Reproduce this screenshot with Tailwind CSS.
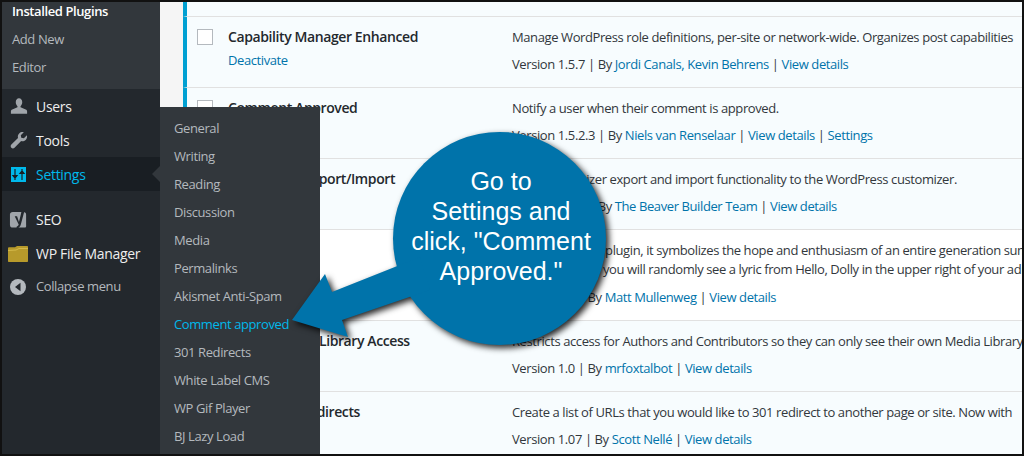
<!DOCTYPE html>
<html lang="en">
<head>
<meta charset="UTF-8" />
<title>Installed Plugins</title>
<script src="https://cdn.jsdelivr.net/npm/@tailwindcss/browser@4"></script>
</head>
<body class="bg-[#111]">
<div class="relative flex w-[1024px] h-[456px] overflow-hidden border-2 border-[#111] bg-[#f5f5f5] font-['Open_Sans',sans-serif] text-[13px] tracking-[-0.4px]">

  <!-- Sidebar -->
  <aside class="w-[158px] shrink-0 bg-[#23282d] text-[#eee]">
    <div class="h-[87px] bg-[#32373c] pl-[10px] text-[#b4b9be]">
      <div class="h-[23px] leading-[18px] font-semibold text-white">Installed Plugins</div>
      <div class="h-[28px] leading-[28px]">Add New</div>
      <div class="h-[28px] leading-[28px]">Editor</div>
    </div>
    <div class="flex h-[34px] items-center text-[14px] tracking-[-0.3px]">
      <svg class="ml-[8px] w-[18px] h-[18px] text-[#a0a5aa]" viewBox="0 0 20 20" fill="currentColor"><path d="M10 1.500c2.200 0 3.600 1.900 3.600 4.300 0 1.900-1 3.600-1.900 4.500v1.200l5.800 2.500c.9.400 1.500 1.100 1.500 2.100v2.400H1v-2.400c0-1 .6-1.700 1.500-2.100l5.800-2.500v-1.200c-.9-.9-1.900-2.600-1.900-4.500 0-2.400 1.400-4.300 3.600-4.300z"/></svg>
      <span class="ml-[8px]">Users</span>
    </div>
    <div class="flex h-[34px] items-center text-[14px] tracking-[-0.3px]">
      <svg class="ml-[8px] w-[18px] h-[18px] text-[#a0a5aa]" viewBox="0 0 20 20" fill="currentColor"><path d="M18.800 4.700c.5 1.900 0 3.900-1.400 5.200-1.400 1.400-3.300 1.800-5 1.300L5 18.600c-1 1-2.500 1-3.500 0s-1-2.500 0-3.500l7.400-7.400c-.5-1.700-.1-3.700 1.300-5C11.600 1.300 13.500.8 15.300 1.300L12 4.600l.5 2.900 2.900.5z"/></svg>
      <span class="ml-[8px]">Tools</span>
    </div>
    <div class="relative flex h-[34px] items-center bg-[#191e23] text-[#00b9eb] text-[14px] tracking-[-0.3px]">
      <svg class="ml-[9px] w-[15px] h-[15px]" viewBox="0 0 15 15"><rect width="15" height="15" fill="#00b9eb"/><path d="M4 2v6.500M2 8.500h4L4 11zM4 11v2M11 13V6.500M9 6.500h4L11 4zM11 4V2" stroke="#191e23" stroke-width="1.200" fill="#191e23"/></svg>
      <span class="ml-[10px]">Settings</span>
      <div class="absolute right-0 top-[9px] border-y-[8px] border-r-[8px] border-y-transparent border-r-[#32373c]"></div>
    </div>
    <div class="flex h-[34px] mt-[11px] items-center text-[14px] tracking-[-0.3px]">
      <svg class="ml-[7px] w-[19px] h-[21px]" viewBox="0 0 20 22"><path d="M4 3h11c2 0 3 1 3 3v12c0 1-.5 1.500-1.500 1.500H4c-2 0-3-1-3-3V6c0-2 1-3 3-3z" fill="#a0a5aa"/><path d="M6 7.500h2.500l2 6 2-8 1-4.500h3l-4 15c-.6 2-1.900 4-4.500 4.500v-2c1.200-.3 1.900-1 2.200-2.200z" fill="#23282d"/></svg>
      <span class="ml-[8px]">SEO</span>
    </div>
    <div class="flex h-[34px] items-center text-[14px] tracking-[-0.3px]">
      <svg class="ml-[6px] w-[20px] h-[17px] shrink-0" viewBox="0 0 20 17"><path d="M0 3.500C0 2.800.5 2.300 1.200 2.300H7L9 1h10c.6 0 1 .4 1 1v14c0 .6-.4 1-1 1H1c-.6 0-1-.4-1-1z" fill="#b79a2b"/><path d="M0 5l8-.5L11 3h9v1H11L8 5.500 0 6z" fill="#d4b94a"/></svg>
      <span class="ml-[8px] whitespace-nowrap">WP File Manager</span>
    </div>
    <div class="flex h-[34px] items-center text-[#b4b9be]">
      <svg class="ml-[8px] w-[16px] h-[16px]" viewBox="0 0 16 16"><circle cx="8" cy="8" r="8" fill="#b4b9be"/><path d="M10.500 3.800v8.400L5 8z" fill="#23282d"/></svg>
      <span class="ml-[10px] whitespace-nowrap">Collapse menu</span>
    </div>
  </aside>

  <!-- Plugin list -->
  <main class="flex-1 min-w-0 pl-[23px] text-[#32373c]">
    <div class="h-[14px] bg-[#f7fcfe] border-l-4 border-[#00a0d2]"></div>

    <div class="flex h-[71px] border-t border-[#e1e1e1] bg-[#f7fcfe] border-l-4 border-l-[#00a0d2] pl-[10px] overflow-hidden whitespace-nowrap">
      <div class="mt-[12px] w-[16px] h-[16px] border border-[#b4b9be] bg-white shrink-0"></div>
      <div class="w-[284px] ml-[15px] shrink-0 pt-[10px]">
        <div class="h-[22px] leading-[20px] text-[14px] font-semibold text-[#23282d]">Capability Manager Enhanced</div>
        <div class="leading-[22px] text-[#0073aa]">Deactivate</div>
      </div>
      <div class="pt-[10px]">
        <div class="h-[27px] leading-[20px]">Manage WordPress role definitions, per-site or network-wide. Organizes post capabilities</div>
        <div class="leading-[20px]">Version 1.5.7 | By <a class="text-[#0073aa]">Jordi Canals, Kevin Behrens</a> | <a class="text-[#0073aa]">View details</a></div>
      </div>
    </div>

    <div class="flex h-[71px] border-t border-[#e1e1e1] bg-[#f7fcfe] border-l-4 border-l-[#00a0d2] pl-[10px] overflow-hidden whitespace-nowrap">
      <div class="mt-[12px] w-[16px] h-[16px] border border-[#b4b9be] bg-white shrink-0"></div>
      <div class="w-[284px] ml-[15px] shrink-0 pt-[10px]">
        <div class="h-[22px] leading-[20px] text-[14px] font-semibold text-[#23282d]">Comment Approved</div>
      </div>
      <div class="pt-[10px]">
        <div class="h-[27px] leading-[20px]">Notify a user when their comment is approved.</div>
        <div class="leading-[20px]">Version 1.5.2.3 | By <a class="text-[#0073aa]">Niels van Renselaar</a> | <a class="text-[#0073aa]">View details</a> | <a class="text-[#0073aa]">Settings</a></div>
      </div>
    </div>

    <div class="flex h-[71px] border-t border-[#e1e1e1] bg-[#f7fcfe] border-l-4 border-l-[#00a0d2] pl-[10px] overflow-hidden whitespace-nowrap">
      <div class="mt-[12px] w-[16px] h-[16px] border border-[#b4b9be] bg-white shrink-0"></div>
      <div class="w-[284px] ml-[15px] shrink-0 pt-[10px]">
        <div class="h-[22px] leading-[20px] text-[14px] font-semibold text-[#23282d]">Customizer Export/Import</div>
      </div>
      <div class="pt-[10px]">
        <div class="h-[27px] leading-[20px]">Adds customizer export and import functionality to the WordPress customizer.</div>
        <div class="leading-[20px]">Version 0.9.2 | By <a class="text-[#0073aa]">The Beaver Builder Team</a> | <a class="text-[#0073aa]">View details</a></div>
      </div>
    </div>

    <div class="flex h-[91px] border-t border-[#e1e1e1] bg-white pl-[14px] overflow-hidden whitespace-nowrap">
      <div class="mt-[12px] w-[16px] h-[16px] border border-[#b4b9be] bg-white shrink-0"></div>
      <div class="w-[284px] ml-[15px] shrink-0 pt-[10px]">
        <div class="h-[22px] leading-[20px] text-[14px] font-semibold text-[#23282d]">Hello Dolly</div>
      </div>
      <div class="pt-[11px]">
        <div class="leading-[19px]">This is not just a plugin, it symbolizes the hope and enthusiasm of an entire generation summed up</div>
        <div class="h-[27px] leading-[19px]">When activated you will randomly see a lyric from Hello, Dolly in the upper right of your admin screen</div>
        <div class="leading-[20px]">Version 1.6 | By <a class="text-[#0073aa]">Matt Mullenweg</a> | <a class="text-[#0073aa]">View details</a></div>
      </div>
    </div>

    <div class="flex h-[71px] border-t border-[#e1e1e1] bg-[#f7fcfe] pl-[14px] overflow-hidden whitespace-nowrap">
      <div class="mt-[12px] w-[16px] h-[16px] border border-[#b4b9be] bg-white shrink-0"></div>
      <div class="w-[284px] ml-[15px] shrink-0 pt-[10px]">
        <div class="h-[22px] leading-[20px] text-[14px] font-semibold text-[#23282d]">Author Media Library Access</div>
      </div>
      <div class="pt-[10px]">
        <div class="h-[27px] leading-[20px]">Restricts access for Authors and Contributors so they can only see their own Media Library</div>
        <div class="leading-[20px]">Version 1.0 | By <a class="text-[#0073aa]">mrfoxtalbot</a> | <a class="text-[#0073aa]">View details</a></div>
      </div>
    </div>

    <div class="flex h-[71px] border-t border-[#e1e1e1] bg-[#f7fcfe] pl-[14px] overflow-hidden whitespace-nowrap">
      <div class="mt-[12px] w-[16px] h-[16px] border border-[#b4b9be] bg-white shrink-0"></div>
      <div class="w-[284px] ml-[15px] shrink-0 pt-[10px]">
        <div class="h-[22px] leading-[20px] text-[14px] font-semibold text-[#23282d]">Simple 301 Redirects</div>
      </div>
      <div class="pt-[10px]">
        <div class="h-[27px] leading-[20px]">Create a list of URLs that you would like to 301 redirect to another page or site. Now with</div>
        <div class="leading-[20px]">Version 1.07 | By <a class="text-[#0073aa]">Scott Nellé</a> | <a class="text-[#0073aa]">View details</a></div>
      </div>
    </div>
  </main>

  <!-- Flyout submenu -->
  <div class="absolute left-[158px] top-[105px] w-[160px] h-[349px] bg-[#32373c] pt-[7px] pl-[14px] text-[#b4b9be]">
    <div class="h-[28px] leading-[28px]">General</div>
    <div class="h-[28px] leading-[28px]">Writing</div>
    <div class="h-[28px] leading-[28px]">Reading</div>
    <div class="h-[28px] leading-[28px]">Discussion</div>
    <div class="h-[28px] leading-[28px]">Media</div>
    <div class="h-[28px] leading-[28px]">Permalinks</div>
    <div class="h-[28px] leading-[28px]">Akismet Anti-Spam</div>
    <div class="h-[28px] leading-[28px] text-[#00b9eb]">Comment approved</div>
    <div class="h-[28px] leading-[28px]">301 Redirects</div>
    <div class="h-[28px] leading-[28px]">White Label CMS</div>
    <div class="h-[28px] leading-[28px]">WP Gif Player</div>
    <div class="h-[28px] leading-[28px]">BJ Lazy Load</div>
  </div>

  <!-- Callout -->
  <svg class="absolute left-0 top-0 w-[1020px] h-[452px] drop-shadow-[3px_3px_3px_rgba(0,0,0,0.85)]" viewBox="2 2 1020 452">
    <circle cx="499.500" cy="238.500" r="106.500" fill="#0073aa"/>
    <path fill="#0073aa" d="M292 320 325 274 332 292 420 257 430 290 342 320 348 337z"/>
  </svg>
  <div class="absolute left-[399px] top-[164px] w-[200px] text-center font-['Liberation_Sans',sans-serif] text-[25px] tracking-normal leading-[30px] text-white">Go to<br />Settings and<br />click, "Comment<br />Approved."</div>
</div>
</body>
</html>
